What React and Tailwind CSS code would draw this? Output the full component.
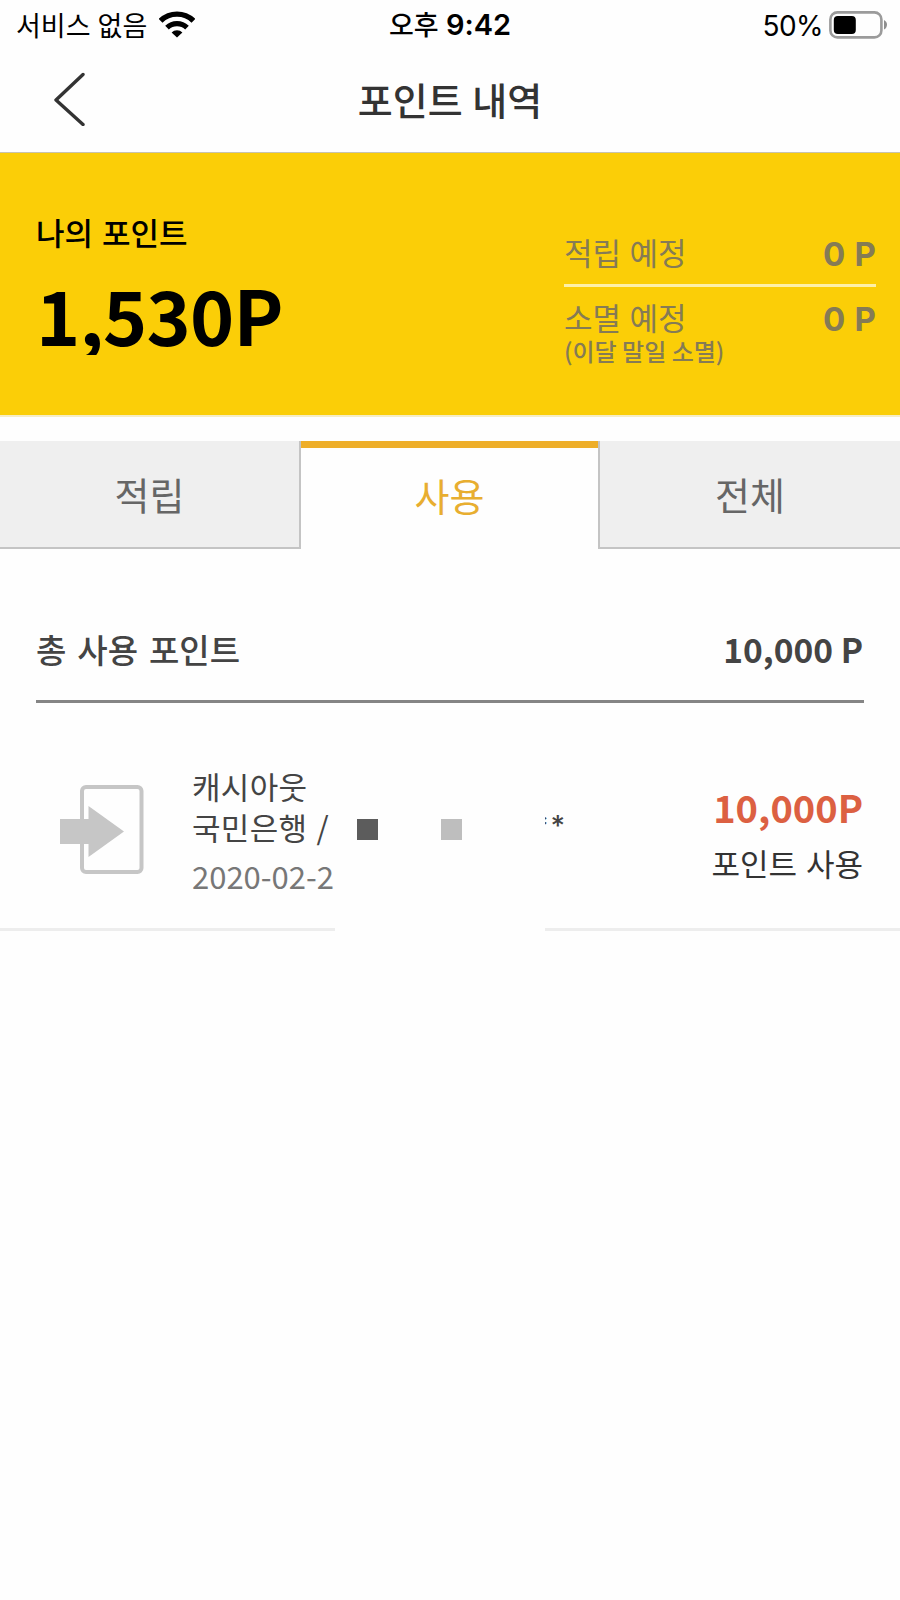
import React, { useState } from "react";

const tabs = ["적립", "사용", "전체"];

const history = [
  {
    id: 1,
    title: "캐시아웃",
    bank: "국민은행 /",
    date: "2020-02-2",
    amount: "10,000P",
    type: "포인트 사용",
  },
];

function WifiIcon() {
  return (
    <svg width="36" height="27" viewBox="0 0 36 27" fill="none" stroke="#000">
      <path d="M1.6 9.8 A23.6 23.6 0 0 1 34.4 9.8" strokeWidth="5.4" />
      <path d="M8 16.6 A14.4 14.4 0 0 1 28 16.6" strokeWidth="5.2" />
      <path
        d="M12.6 21.4 A7.6 7.6 0 0 1 23.4 21.4 L18 26.6 Z"
        fill="#000"
        stroke="none"
      />
    </svg>
  );
}

function BatteryIcon() {
  return (
    <svg width="59" height="28" viewBox="0 0 59 28">
      <rect
        x="1.4"
        y="1.4"
        width="51"
        height="25"
        rx="7"
        fill="none"
        stroke="#9b9b9b"
        strokeWidth="2.6"
      />
      <rect x="4.8" y="5" width="22" height="18" rx="4" fill="#000" />
      <path d="M55 9 C59 11 59 16.4 55 18.6 Z" fill="#8e8e8e" />
    </svg>
  );
}

function CashOutIcon() {
  return (
    <svg width="84" height="90" viewBox="0 0 84 90">
      <rect
        x="22"
        y="2"
        width="59.5"
        height="85"
        rx="4"
        fill="none"
        stroke="#c6c6c6"
        strokeWidth="4"
      />
      <path
        d="M0 34 H28.5 V21 L64 46.5 L28.5 72 V59 H0 Z"
        fill="#c6c6c6"
      />
    </svg>
  );
}

function StatusBar() {
  return (
    <div className="grid h-[49px] grid-cols-3 items-center pl-4 pr-3 text-black">
      <div className="flex items-center gap-3">
        <span className="whitespace-pre text-[27px] leading-[47px] [word-spacing:1px]">
          서비스 없음
        </span>
        <WifiIcon />
      </div>
      <div className="whitespace-pre pr-1 pt-px text-center font-['Inter','Noto_Sans_CJK_KR',sans-serif] text-[29px] font-semibold leading-[46px]">
        <span className="text-[27px] font-medium">오후</span> 9:42
      </div>
      <div className="flex items-center justify-end gap-[6px]">
        <span className="pt-[2px] font-['Inter',sans-serif] text-[28px] leading-[46px] tracking-[-0.6px]">
          50%
        </span>
        <BatteryIcon />
      </div>
    </div>
  );
}

function Header() {
  return (
    <div className="grid h-[104px] grid-cols-[100px_1fr_100px] items-center border-b border-[#c9c3ad] pb-[3px]">
      <button className="pl-[53px]">
        <svg width="32" height="54" viewBox="0 0 32 54" fill="none">
          <path
            d="M30 2.5 L3 28 L30 52.5"
            stroke="#333"
            strokeWidth="3.4"
            strokeLinecap="round"
            strokeLinejoin="round"
          />
        </svg>
      </button>
      <h1 className="text-center text-[38px] font-medium leading-[96px] text-[#333] [word-spacing:1px]">
        포인트 내역
      </h1>
    </div>
  );
}

function PointSummary() {
  return (
    <div className="flex h-[264px] justify-between border-b-2 border-[#f6edc5] bg-[#fbce07] pl-9 pr-6">
      <div className="pt-[59px] text-black">
        <p className="text-[31px] font-medium leading-10 [word-spacing:2px]">
          나의 포인트
        </p>
        <p className="mt-5 h-[83px] overflow-hidden text-[75px] font-bold leading-[84px] tracking-[-0.8px]">
          1,530P
        </p>
      </div>
      <div className="w-[312px] pt-[79px] text-[#857b55]">
        <div className="flex h-[55px] items-start justify-between border-b-[3px] border-[#fdf0a8]">
          <span className="text-[31px] leading-10 [word-spacing:1.5px]">
            적립 예정
          </span>
          <span className="font-['Inter',sans-serif] text-[33px] font-bold leading-[44px] [word-spacing:1.5px]">
            0 P
          </span>
        </div>
        <div className="flex items-start justify-between pt-[10px]">
          <span className="text-[31px] leading-10 [word-spacing:1.5px]">
            소멸 예정
          </span>
          <span className="font-['Inter',sans-serif] text-[33px] font-bold leading-[44px] [word-spacing:1.5px]">
            0 P
          </span>
        </div>
        <p className="-mt-1.5 text-[24px] font-medium leading-8">
          (이달 말일 소멸)
        </p>
      </div>
    </div>
  );
}

function Tabs({ active, onChange }) {
  return (
    <div className="mt-6 grid h-[108px] grid-cols-[301px_297px_302px] text-[38px]">
      {tabs.map((tab, i) => (
        <button
          key={tab}
          onClick={() => onChange(i)}
          className={
            active === i
              ? "border-t-[7px] border-[#eeae29] pb-[9px] text-[#e8ae30]"
              : `border-b-2 border-[#c4c4c4] bg-[#efefef] pb-px text-[#666] ${
                  i < active ? "border-r-2" : "border-l-2"
                }`
          }
        >
          {tab}
        </button>
      ))}
    </div>
  );
}

function HistoryRow({ item }) {
  return (
    <div>
      <div className="flex h-[225px] pl-[60px] pr-[37px]">
        <div className="w-[132px] pt-[82px]">
          <CashOutIcon />
        </div>
        <div className="pt-[62px] text-[31px] leading-[41px] text-[#444]">
          <p className="tracking-[0.3px]">{item.title}</p>
          <div className="flex h-[41px]">
            <span className="w-[165px] whitespace-pre tracking-[0.3px] [word-spacing:2px]">
              {item.bank}
            </span>
            {/* masked account number */}
            <span className="mt-[13px] h-[21px] w-[21px] bg-[#5c5c5c]" />
            <span className="ml-[63px] mt-[13px] h-[21px] w-[21px] bg-[#bebebe]" />
            <span className="ml-[83px] flex w-[22px] justify-end overflow-hidden font-['Inter',sans-serif] text-[28px] font-medium leading-[41px] tracking-[2px]">
              **
            </span>
          </div>
          <p className="mt-2 text-[#777]">{item.date}</p>
        </div>
        <div className="ml-auto pt-[78px] text-right">
          <p className="text-[38px] font-bold leading-[52px] text-[#dc6042]">
            {item.amount}
          </p>
          <p className="mt-1 text-[31px] leading-[52px] text-[#333] [word-spacing:2px]">
            {item.type}
          </p>
        </div>
      </div>
      <div className="flex justify-between">
        <div className="h-[3px] w-[335px] bg-[#ededed]" />
        <div className="h-[3px] w-[355px] bg-[#ededed]" />
      </div>
    </div>
  );
}

function App() {
  const [active, setActive] = useState(1);

  return (
    <div className="h-[1600px] w-[900px] overflow-hidden bg-[#fefefe] font-['Noto_Sans_CJK_KR',sans-serif]">
      <StatusBar />
      <Header />
      <PointSummary />
      <Tabs active={active} onChange={setActive} />

      {/* Total */}
      <div className="mx-9 flex h-[154px] justify-between border-b-[3px] border-[#858585] pt-[75px] text-[#444]">
        <span className="text-[33px] font-medium leading-[51px] [word-spacing:3.5px]">
          총 사용 포인트
        </span>
        <span className="pr-px text-[33.5px] font-bold leading-[50px]">
          10,000 P
        </span>
      </div>

      {history.map((item) => (
        <HistoryRow key={item.id} item={item} />
      ))}
    </div>
  );
}

export default App;
